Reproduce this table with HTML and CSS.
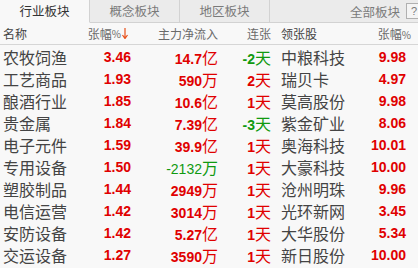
FILE: index.html
```html
<!DOCTYPE html>
<html lang="zh">
<head>
<meta charset="utf-8">
<link rel="stylesheet" href="styles.css">
</head>
<body>
<div class="panel">
  <div class="tabs">
    <div class="tab active">行业板块</div>
    <div class="tab">概念板块</div>
    <div class="tab">地区板块</div>
    <div class="tab-rest"><span class="all">全部板块</span><span class="help">?</span></div>
  </div>
  <div class="row head">
    <div class="c-name">名称</div>
    <div class="c-pct">张幅<span class="pc">%</span><svg class="arrow" width="6" height="11" viewBox="0 0 6 11"><path d="M3 0V10M0.5 7L3 10.5L5.5 7" fill="none" stroke="#e8501a" stroke-width="1.2"/></svg></div>
    <div class="c-flow">主力净流入</div>
    <div class="c-days">连张</div>
    <div class="c-stock">领张股</div>
    <div class="c-spct last">张幅<span class="pc">%</span></div>
  </div>
  <div class="rows">
    <div class="row"><div class="c-name">农牧饲渔</div><div class="c-pct num up">3.46</div><div class="c-flow up"><b>14.7</b>亿</div><div class="c-days down"><b>-2</b>天</div><div class="c-stock">中粮科技</div><div class="c-spct num up">9.98</div></div>
    <div class="row"><div class="c-name">工艺商品</div><div class="c-pct num up">1.93</div><div class="c-flow up"><b>590</b>万</div><div class="c-days up"><b>2</b>天</div><div class="c-stock">瑞贝卡</div><div class="c-spct num up">4.97</div></div>
    <div class="row"><div class="c-name">酿酒行业</div><div class="c-pct num up">1.85</div><div class="c-flow up"><b>10.6</b>亿</div><div class="c-days up"><b>1</b>天</div><div class="c-stock">莫高股份</div><div class="c-spct num up">9.98</div></div>
    <div class="row"><div class="c-name">贵金属</div><div class="c-pct num up">1.84</div><div class="c-flow up"><b>7.39</b>亿</div><div class="c-days down"><b>-3</b>天</div><div class="c-stock">紫金矿业</div><div class="c-spct num up">8.06</div></div>
    <div class="row"><div class="c-name">电子元件</div><div class="c-pct num up">1.59</div><div class="c-flow up"><b>39.9</b>亿</div><div class="c-days up"><b>1</b>天</div><div class="c-stock">奥海科技</div><div class="c-spct num up">10.01</div></div>
    <div class="row"><div class="c-name">专用设备</div><div class="c-pct num up">1.50</div><div class="c-flow down"><b class="thin">-2132</b>万</div><div class="c-days up"><b>1</b>天</div><div class="c-stock">大豪科技</div><div class="c-spct num up">10.00</div></div>
    <div class="row"><div class="c-name">塑胶制品</div><div class="c-pct num up">1.44</div><div class="c-flow up"><b>2949</b>万</div><div class="c-days up"><b>1</b>天</div><div class="c-stock">沧州明珠</div><div class="c-spct num up">9.96</div></div>
    <div class="row"><div class="c-name">电信运营</div><div class="c-pct num up">1.42</div><div class="c-flow up"><b>3014</b>万</div><div class="c-days up"><b>1</b>天</div><div class="c-stock">光环新网</div><div class="c-spct num up">3.45</div></div>
    <div class="row"><div class="c-name">安防设备</div><div class="c-pct num up">1.42</div><div class="c-flow up"><b>5.27</b>亿</div><div class="c-days up"><b>1</b>天</div><div class="c-stock">大华股份</div><div class="c-spct num up">5.34</div></div>
    <div class="row"><div class="c-name">交运设备</div><div class="c-pct num up">1.27</div><div class="c-flow up"><b>3590</b>万</div><div class="c-days up"><b>1</b>天</div><div class="c-stock">新日股份</div><div class="c-spct num up">10.00</div></div>
  </div>
</div>
</body>
</html>
```
FILE: styles.css
```css
html, body {
  margin: 0;
  padding: 0;
  background: #f8f8f8;
}
body {
  width: 418px;
  height: 268px;
  overflow: hidden;
  font-family: "Noto Sans CJK SC", "Noto Sans", sans-serif;
}
.panel {
  display: flex;
  flex-direction: column;
}
.tabs {
  display: flex;
  height: 23px;
}
.tab {
  width: 89px;
  border-right: 1px solid #d2d2d2;
  border-bottom: 1px solid #d2d2d2;
  background: #ebebeb;
  color: #7a7a7a;
  font-size: 12.5px;
  line-height: 22px;
  text-align: center;
}
.tab.active {
  background: #f8f8f8;
  color: #333;
  border-bottom-color: transparent;
}
.tab-rest {
  flex: 1;
  display: flex;
  justify-content: flex-end;
  align-items: center;
  background: #ebebeb;
  border-bottom: 1px solid #d2d2d2;
  color: #7a7a7a;
  font-size: 12.5px;
}
.all {
  margin-right: 6px;
}
.help {
  width: 14px;
  height: 14px;
  border: 1px solid #b0b0b0;
  background: #f4f4f4;
  font-family: "Liberation Sans", sans-serif;
  font-size: 11px;
  line-height: 14px;
  text-align: center;
  margin-right: -4px;
  margin-bottom: 1px;
}
.row {
  display: grid;
  grid-template-columns: 78px 50px 87px 53px 80px 55px;
  padding-left: 3px;
  height: 22px;
  align-items: center;
  white-space: nowrap;
}
.head {
  height: 21px;
  border-bottom: 1px solid #d6d6d6;
  color: #6a6a6a;
  font-size: 12px;
}
.head .c-pct {
  display: flex;
  align-items: center;
  justify-content: flex-end;
  padding-right: 3px;
}
.pc {
  font-size: 10px;
}
.arrow {
  margin-left: 1px;
}
.head .last {
  margin-right: -5px;
}
.rows .row {
  font-size: 16px;
}
.c-name, .c-stock {
  color: #444;
}
.c-stock {
  padding-left: 10px;
}
.c-pct, .c-flow, .c-days, .c-spct {
  text-align: right;
}
.num, .c-flow b, .c-days b {
  font-family: "Liberation Sans", sans-serif;
  font-weight: bold;
  font-size: 14px;
}
.c-flow b.thin {
  font-weight: normal;
}
.up {
  color: #e00000;
}
.down {
  color: #109a10;
}
```
